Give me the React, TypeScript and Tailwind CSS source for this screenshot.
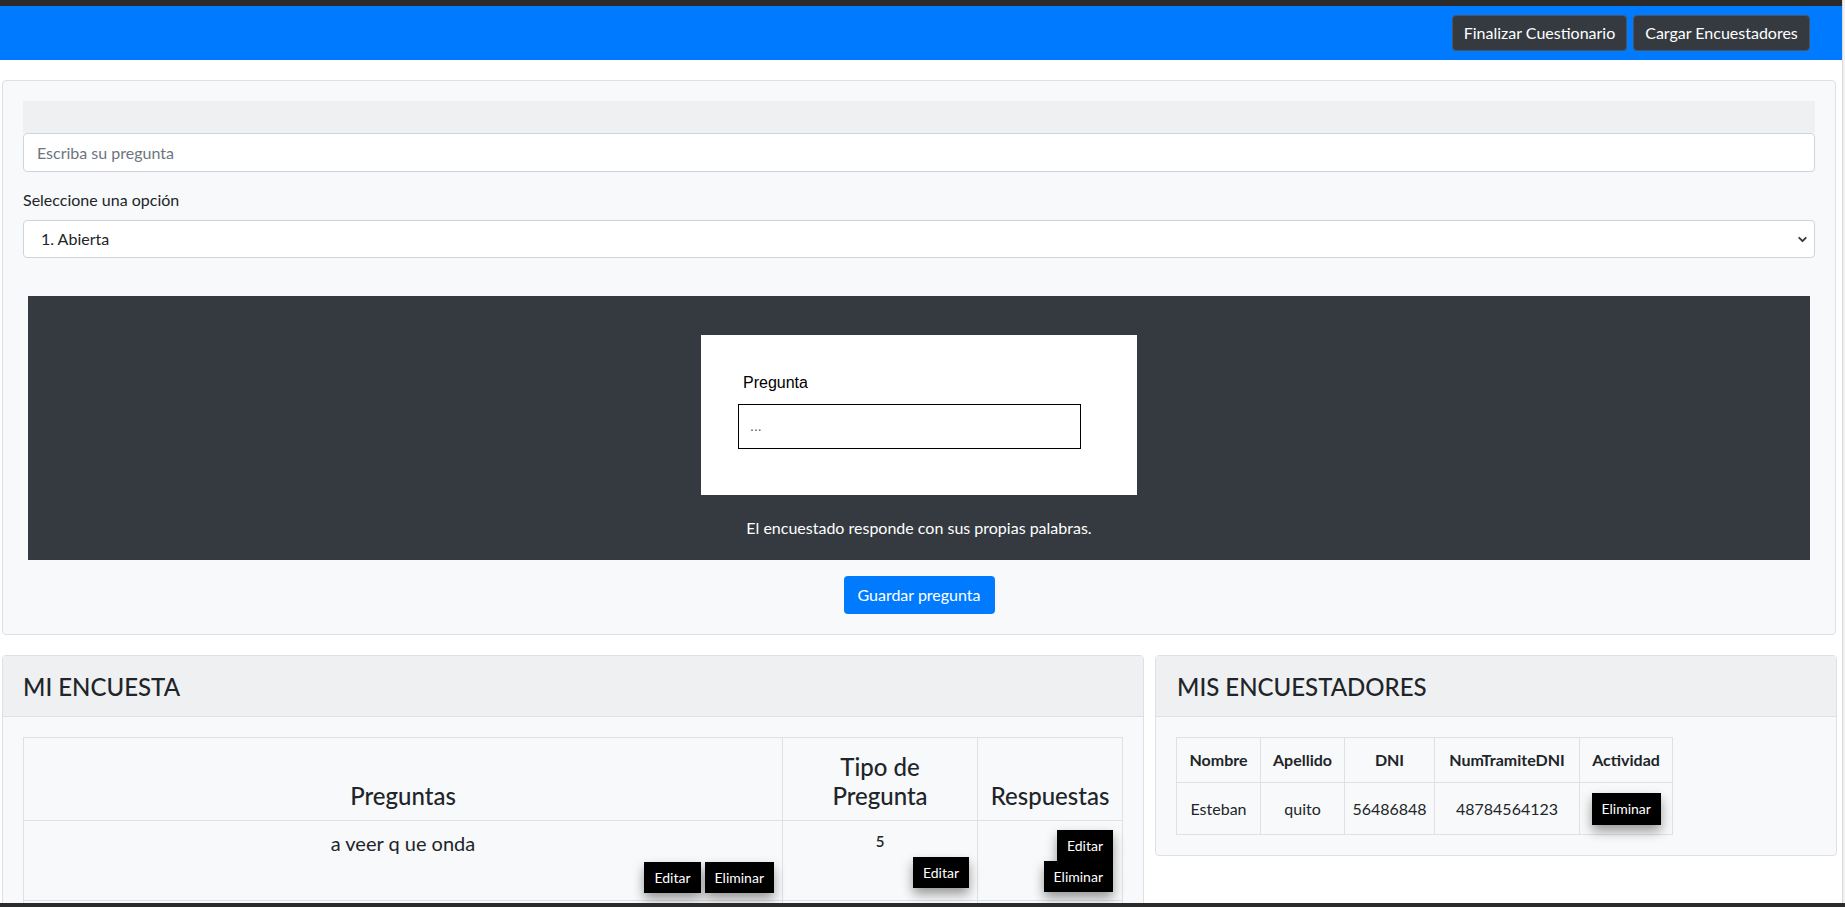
import { ChevronDown } from "lucide-react";

const btnDark =
  "bg-black text-white text-[14px] leading-[20px] px-[10px] shadow-[0_6px_12px_rgba(0,0,0,0.4)]";

export default function App() {
  return (
    <div className="relative flex h-[907px] overflow-hidden bg-white font-['Lato',sans-serif] text-[#212529]">
      <div className="w-[1842px] shrink-0">
        {/* top edge */}
        <div className="h-[6px] bg-[#2b2b2b]" />
        {/* navbar */}
        <header className="flex h-[54px] items-center justify-end gap-[6px] bg-[#007bff] pr-[32px]">
          <button className="h-[36px] w-[175px] rounded-[4px] border border-[#4d545b] bg-[#343a40] text-[16px] text-white">
            Finalizar Cuestionario
          </button>
          <button className="h-[36px] w-[177px] rounded-[4px] border border-[#4d545b] bg-[#343a40] text-[16px] text-white">
            Cargar Encuestadores
          </button>
        </header>

        <main className="pl-[2px] pr-[6px] pt-[20px]">
          {/* question editor */}
          <section className="rounded-[4px] border border-[#dee0e3] bg-[#f8f9fa] p-[20px]">
            <div className="h-[32px] bg-[#eff0f2]" />
            <div className="flex h-[39px] items-center rounded-[4px] border border-[#ced4da] bg-white px-[13px] text-[16px] text-[#6c757d]">
              Escriba su pregunta
            </div>
            <label className="mt-[16px] mb-[8px] block text-[16px] leading-[24px]">
              Seleccione una opción
            </label>
            <div className="flex h-[38px] items-center justify-between rounded-[4px] border border-[#ced4da] bg-white pl-[17px] pr-[5px] text-[16px]">
              <span>1. Abierta</span>
              <ChevronDown size={13} strokeWidth={3.5} className="text-[#343a40]" />
            </div>

            {/* preview */}
            <div className="mx-[5px] mt-[38px] flex h-[264px] flex-col items-center bg-[#343a40] pt-[39px]">
              <div className="h-[160px] w-[436px] bg-white pl-[37px] pt-[39px] font-['Liberation_Sans',Arial,sans-serif]">
                <p className="pl-[5px] text-[16px] leading-[18px] text-black">Pregunta</p>
                <div className="mt-[12px] flex h-[45px] w-[343px] items-center border border-black px-[11px] text-[14px] text-[#555]">
                  ...
                </div>
              </div>
              <p className="mt-[21px] text-[16px] leading-[24px] text-white">
                El encuestado responde con sus propias palabras.
              </p>
            </div>

            <div className="mt-[16px] flex justify-center">
              <button className="h-[38px] w-[151px] rounded-[4px] bg-[#007bff] text-[16px] text-white">
                Guardar pregunta
              </button>
            </div>
          </section>

          {/* bottom cards */}
          <div className="mt-[20px] flex items-start gap-[11px]">
            <section className="w-[1142px] shrink-0 rounded-[4px] border border-[#dee0e3] bg-[#f8f9fa]">
              <div className="flex h-[61px] items-center border-b border-[#dee0e3] bg-[#eff0f2] px-[20px]">
                <h4 className="text-[24px] font-medium leading-[29px]">MI ENCUESTA</h4>
              </div>
              <div className="p-[20px]">
                <table className="w-full border-collapse text-center">
                  <thead>
                    <tr className="h-[83px]">
                      <th className="w-[759px] border border-[#dee2e6] px-[12px] pb-[10px] align-bottom text-[24px] font-medium leading-[29px]">
                        Preguntas
                      </th>
                      <th className="w-[195px] border border-[#dee2e6] px-[12px] pb-[10px] align-bottom text-[24px] font-medium leading-[29px]">
                        Tipo de
                        <br />
                        Pregunta
                      </th>
                      <th className="border border-[#dee2e6] px-[6px] pb-[10px] align-bottom text-[24px] font-medium leading-[29px]">
                        Respuestas
                      </th>
                    </tr>
                  </thead>
                  <tbody>
                    <tr className="h-[80px]">
                      <td className="border border-[#dee2e6] px-[8px] pt-[10px] align-top">
                        <p className="text-[20px] leading-[24px]">a veer q ue onda</p>
                        <div className="mt-[7px] flex justify-end gap-[4px]">
                          <button className={`${btnDark} h-[31px]`}>Editar</button>
                          <button className={`${btnDark} h-[31px]`}>Eliminar</button>
                        </div>
                      </td>
                      <td className="border border-[#dee2e6] px-[8px] pt-[10px] align-top">
                        <p className="text-[15px] font-semibold leading-[20px]">5</p>
                        <div className="mt-[6px] flex justify-end">
                          <button className={`${btnDark} h-[31px]`}>Editar</button>
                        </div>
                      </td>
                      <td className="border border-[#dee2e6] px-[9px] pt-[9px] align-top">
                        <div className="flex flex-col items-end">
                          <button className={`${btnDark} h-[31px]`}>Editar</button>
                          <button className={`${btnDark} h-[31px]`}>Eliminar</button>
                        </div>
                      </td>
                    </tr>
                    <tr className="h-[40px]">
                      <td className="border border-[#dee2e6]" />
                      <td className="border border-[#dee2e6]" />
                      <td className="border border-[#dee2e6]" />
                    </tr>
                  </tbody>
                </table>
              </div>
            </section>

            <section className="w-[682px] shrink-0 rounded-[4px] border border-[#dee0e3] bg-[#f8f9fa]">
              <div className="flex h-[61px] items-center border-b border-[#dee0e3] bg-[#eff0f2] px-[21px]">
                <h4 className="text-[24px] font-medium leading-[29px]">MIS ENCUESTADORES</h4>
              </div>
              <div className="p-[20px]">
                <table className="border-collapse text-center text-[16px]">
                  <thead>
                    <tr className="h-[45px] font-bold">
                      <th className="w-[84px] border border-[#dee2e6]">Nombre</th>
                      <th className="w-[84px] border border-[#dee2e6]">Apellido</th>
                      <th className="w-[90px] border border-[#dee2e6]">DNI</th>
                      <th className="w-[145px] border border-[#dee2e6]">NumTramiteDNI</th>
                      <th className="w-[93px] border border-[#dee2e6]">Actividad</th>
                    </tr>
                  </thead>
                  <tbody>
                    <tr className="h-[52px]">
                      <td className="border border-[#dee2e6]">Esteban</td>
                      <td className="border border-[#dee2e6]">quito</td>
                      <td className="border border-[#dee2e6]">56486848</td>
                      <td className="border border-[#dee2e6]">48784564123</td>
                      <td className="border border-[#dee2e6]">
                        <button className={`${btnDark} h-[32px] w-[69px] px-0`}>Eliminar</button>
                      </td>
                    </tr>
                  </tbody>
                </table>
              </div>
            </section>
          </div>
        </main>
      </div>
      {/* scrollbar edge */}
      <div className="w-[3px] border-l border-[#d9d9d9] bg-[#f1f1f1]" />
      {/* bottom edge */}
      <div className="absolute bottom-0 left-0 h-[4px] w-full bg-[#2b2b2b]" />
    </div>
  );
}
